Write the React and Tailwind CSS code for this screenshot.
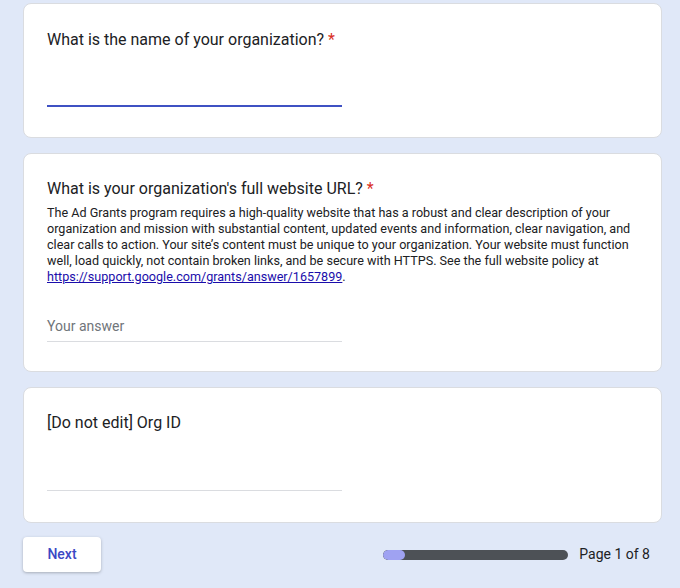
export default function App() {
  return (
    <div className="min-h-[588px] bg-[#e0e8f8] px-[23px] pt-[3px] font-['Roboto',sans-serif] text-[#202124]">
      <div className="flex w-[639px] flex-col gap-[15px]">
        {/* pregunta 1 */}
        <div className="h-[135px] rounded-[8px] border border-[#dadce0] bg-white px-[23px] pt-[24px]">
          <div className="text-[16px] leading-[24px]">
            What is the name of your organization? <span className="text-[#d93025]">*</span>
          </div>
          <div className="mt-[53px] h-[2px] w-[295px] bg-[#3f51c3]" />
        </div>

        {/* pregunta 2 */}
        <div className="h-[219px] rounded-[8px] border border-[#dadce0] bg-white px-[23px] pt-[23px]">
          <div className="text-[16px] leading-[24px]">
            What is your organization's full website URL? <span className="text-[#d93025]">*</span>
          </div>
          <p className="mt-[4px] w-[594px] text-[12.6px] leading-[16px]">
            The Ad Grants program requires a high-quality website that has a robust and clear description of your
            organization and mission with substantial content, updated events and information, clear navigation, and
            clear calls to action. Your site’s content must be unique to your organization. Your website must function
            well, load quickly, not contain broken links, and be secure with HTTPS. See the full website policy at{' '}
            <a className="text-[#1a0dab] underline">https://support.google.com/grants/answer/1657899</a>.
          </p>
          <div className="mt-[31px] w-[295px] border-b border-[#dadce0] pb-[5px] text-[14px] leading-[20px] text-[#70757a]">
            Your answer
          </div>
        </div>

        {/* pregunta 3 */}
        <div className="h-[136px] rounded-[8px] border border-[#dadce0] bg-white px-[23px] pt-[23px]">
          <div className="text-[16px] leading-[24px]">[Do not edit] Org ID</div>
          <div className="mt-[55px] h-px w-[295px] bg-[#dadce0]" />
        </div>
      </div>

      <div className="mt-[14px] flex w-[627px] items-center justify-between">
        <button className="h-[35px] w-[78px] rounded-[4px] bg-white text-[14px] font-medium text-[#3b48c4] shadow-[0_1px_3px_rgba(60,64,67,0.35)]">
          Next
        </button>
        <div className="flex items-center gap-[11px]">
          <div className="h-[10px] w-[185px] overflow-hidden rounded-full bg-[#4d5156]">
            <div className="h-full w-[22px] rounded-full bg-[#9fa2f2]" />
          </div>
          <span className="text-[14px]">Page 1 of 8</span>
        </div>
      </div>
    </div>
  );
}
